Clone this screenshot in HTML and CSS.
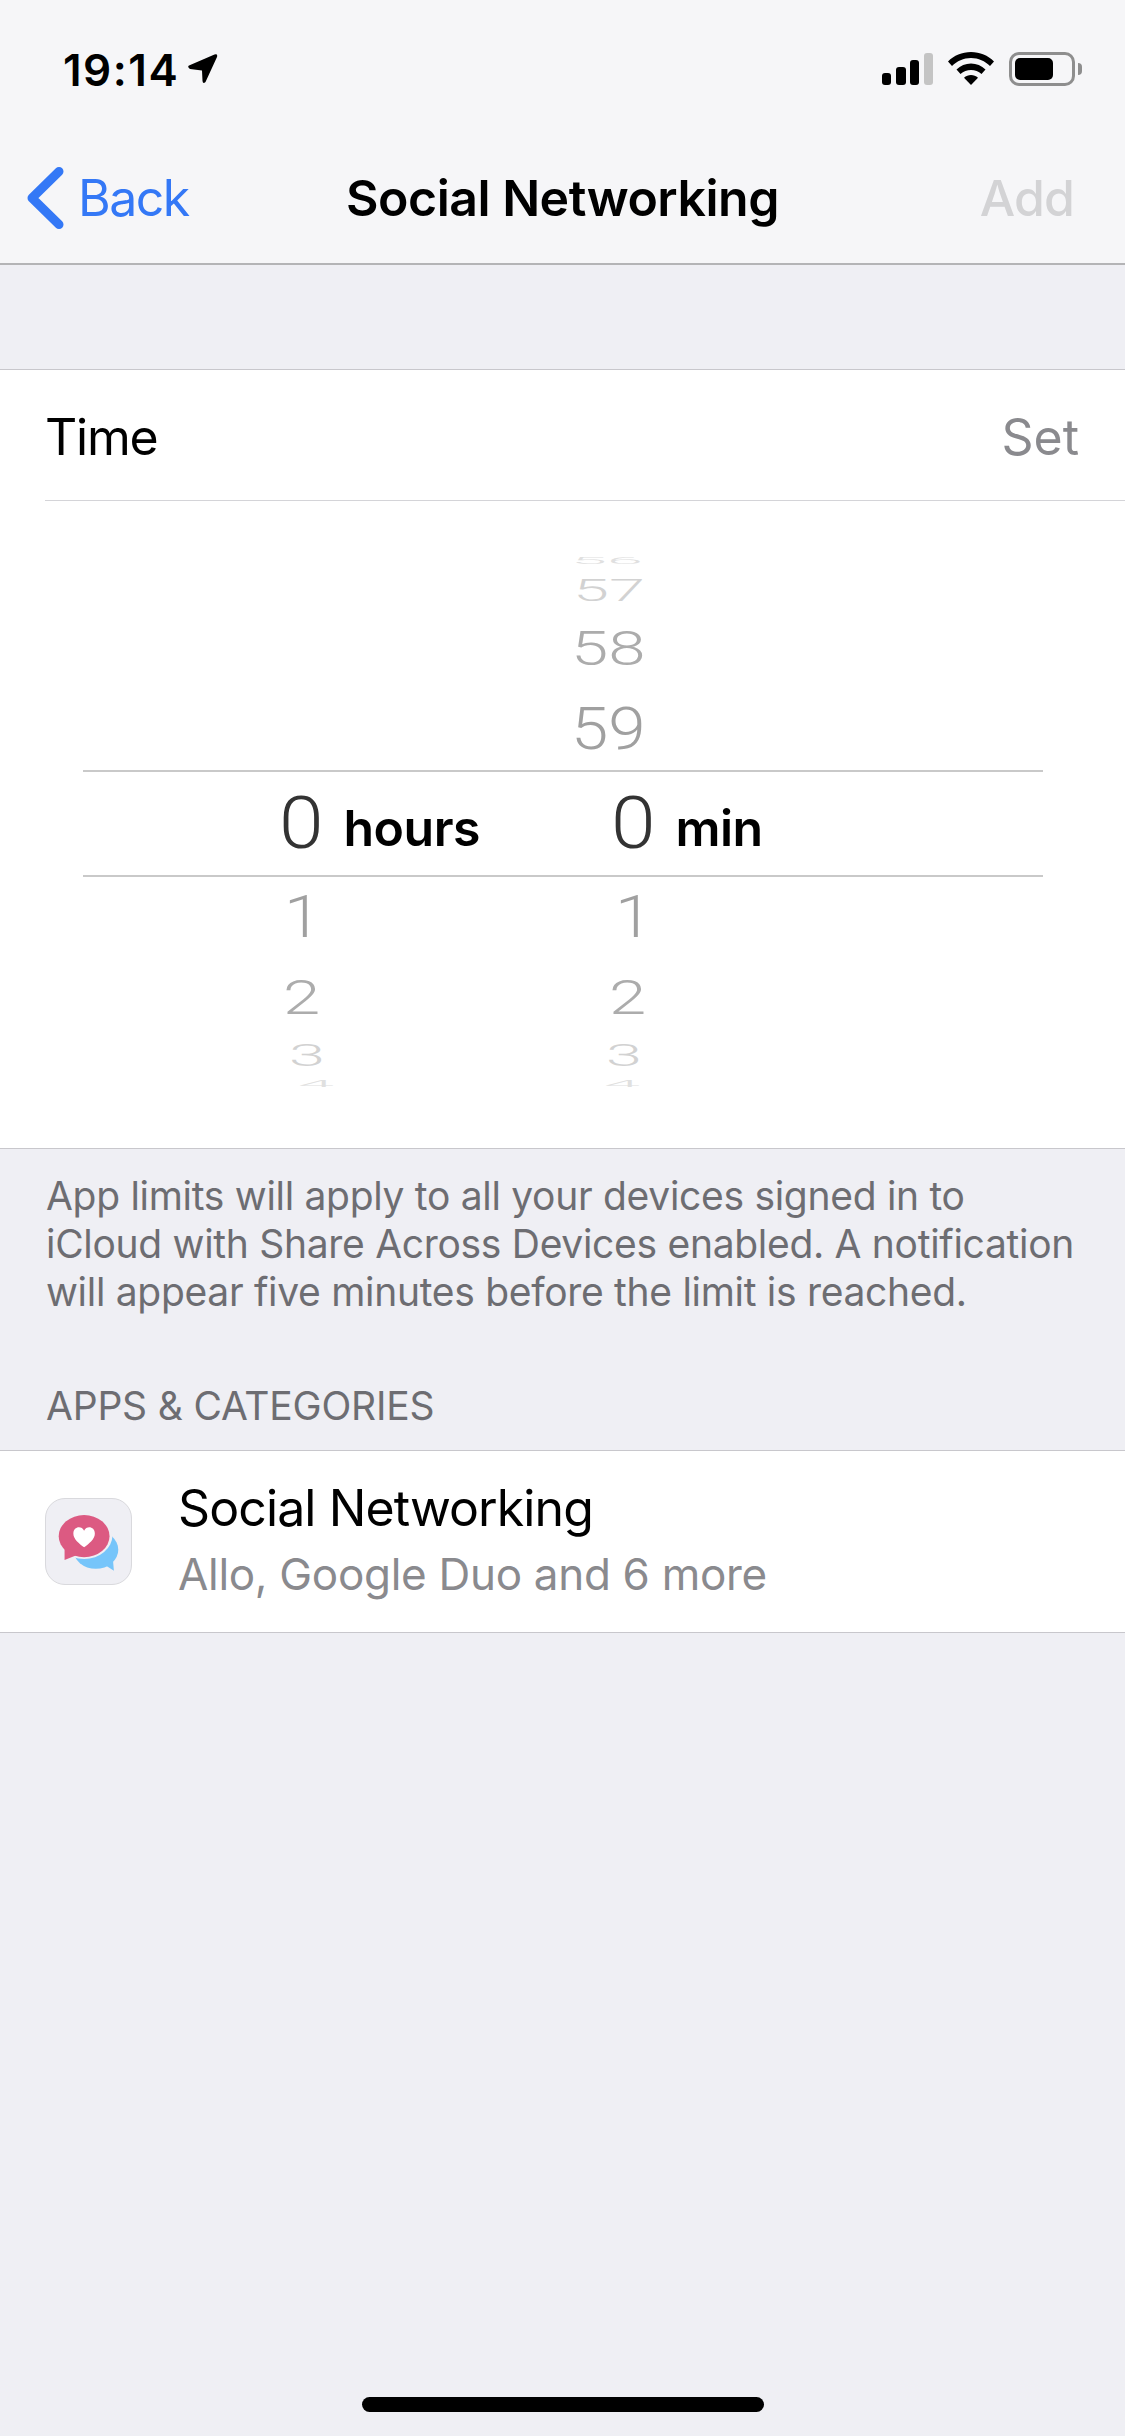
FILE: index.html
```html
<!DOCTYPE html>
<html lang="en">
<head>
<meta charset="utf-8">
<title>Social Networking</title>
<link rel="stylesheet" href="styles.css">
</head>
<body>
<div class="screen">
  <header class="top">
    <div class="status">
      <div class="status-left">
        <span class="clock">19:14</span>
        <svg class="loc" viewBox="0 0 30 31"><path d="M1 11.500 26.500 0.500Q30 -0.500 29 3L17.500 28Q15 30.500 14.500 27L14 16.600 2 15Q-1 13 1 11.500Z"/></svg>
      </div>
      <div class="status-right">
        <svg class="signal" viewBox="0 0 51 32"><rect x="0" y="20" width="9" height="12" rx="3"/><rect x="14" y="14" width="10" height="18" rx="3"/><rect x="28" y="7" width="9" height="25" rx="3"/><rect class="off" x="42" y="0" width="9" height="32" rx="3"/></svg>
        <svg class="wifi" viewBox="0 0 46 33"><path d="M23 0C32 0 40 3.500 46 9.500L42 14C37 9 30.500 6 23 6S9 9 4 14L0 9.500C6 3.500 14 0 23 0Z"/><path d="M23 11.500C28.500 11.500 33.500 13.500 37.500 17.500L33.500 22C30.500 19.300 27 18 23 18S15.500 19.300 12.500 22L8.500 17.500C12.500 13.500 17.500 11.500 23 11.500Z"/><path d="M23 23C25.500 23 28 24 30 25.800L23 33 16 25.800C18 24 20.500 23 23 23Z"/></svg>
        <div class="battery"><div class="battery-body"><div class="battery-fill"></div></div><div class="battery-cap"></div></div>
      </div>
    </div>
    <nav class="nav">
      <a class="back">
        <svg class="chevron" viewBox="0 0 38 62"><path d="M33 4.500 6 31 33 57.500"/></svg>
        <span>Back</span>
      </a>
      <h1 class="title">Social Networking</h1>
      <span class="add">Add</span>
    </nav>
  </header>

  <section class="card">
    <div class="time-row">
      <span class="time-label">Time</span>
      <span class="time-set">Set</span>
    </div>
    <div class="wheel">
      <div class="w-row r56"><span class="cell-h"></span><span class="cell-m"><span class="num m56 s16">56</span></span></div>
      <div class="w-row r57"><span class="cell-h"></span><span class="cell-m"><span class="num m57 s51 f1">57</span></span></div>
      <div class="w-row r58"><span class="cell-h"></span><span class="cell-m"><span class="num m56 s79 f2">58</span></span></div>
      <div class="w-row r59"><span class="cell-h"></span><span class="cell-m"><span class="num m56 s100 f3">59</span></span></div>
      <div class="w-row selected">
        <span class="cell-h"><span class="num big h0">0</span><span class="unit">hours</span></span>
        <span class="cell-m"><span class="num big m0">0</span><span class="unit">min</span></span>
      </div>
      <div class="w-row r1"><span class="cell-h"><span class="num h1 s100 f3">1</span></span><span class="cell-m"><span class="num m1 s100 f3">1</span></span></div>
      <div class="w-row r2"><span class="cell-h"><span class="num h2 s79 f2">2</span></span><span class="cell-m"><span class="num m2 s79 f2">2</span></span></div>
      <div class="w-row r3"><span class="cell-h"><span class="num h3 s51 f1">3</span></span><span class="cell-m"><span class="num m3 s51 f1">3</span></span></div>
      <div class="w-row r4"><span class="cell-h"><span class="num h4 s16">4</span></span><span class="cell-m"><span class="num m4 s16">4</span></span></div>
    </div>
  </section>

  <p class="note">App limits will apply to all your devices signed in to iCloud with Share Across Devices enabled. A notification will appear five minutes before the limit is reached.</p>

  <h2 class="section-head">APPS &amp; CATEGORIES</h2>

  <section class="app-row">
    <div class="app-icon">
      <svg viewBox="0 0 87 87">
        <ellipse cx="51" cy="52" rx="23" ry="19.500" fill="#76c5fa"/>
        <path d="M58 66 69.500 73.500 68 56Z" fill="#76c5fa"/>
        <ellipse cx="39" cy="37" rx="29" ry="24.500" fill="#efeff4"/>
        <path d="M14 52 13 66 36 57Z" fill="#efeff4"/>
        <ellipse cx="39" cy="38" rx="26" ry="21.500" fill="#dc5a82"/>
        <path d="M19 49 19 62.500 35 56Z" fill="#dc5a82"/>
        <path d="M39 49.500C34 45.500 28 41 28 35.500 28 28 36.500 27 39 32.500 41.500 27 50 28 50 35.500 50 41 44 45.500 39 49.500Z" fill="#fff"/>
      </svg>
    </div>
    <div class="app-text">
      <div class="app-name">Social Networking</div>
      <div class="app-sub">Allo, Google Duo and 6 more</div>
    </div>
  </section>

  <div class="home-wrap"><div class="home-bar"></div></div>
</div>
</body>
</html>
```
FILE: styles.css
```css
* { box-sizing: border-box; }
html, body { margin: 0; padding: 0; }
body { width: 1125px; height: 2436px; overflow: hidden; background: #efeff4; font-family: Inter, "Liberation Sans", sans-serif; color: #000; }
.screen { width: 1125px; height: 2436px; display: flex; flex-direction: column; }

.top { height: 265px; background: #f6f6f8; border-bottom: 2px solid #b4b4b6; flex: none; }
.status { height: 132px; display: flex; justify-content: space-between; padding: 52px 43px 0 63px; }
.status-left { display: flex; align-items: flex-start; }
.clock { font-size: 44px; font-weight: 600; line-height: 36px; letter-spacing: 1.5px; }
.loc { width: 30px; height: 31px; margin: 2px 0 0 9px; }
.status-right { display: flex; align-items: flex-start; }
.signal { width: 51px; height: 32px; margin: 1px 0 0 0; }
.signal .off { fill: #c4c4c4; }
.wifi { width: 46px; height: 33px; margin: 0 0 0 15px; }
.battery { display: flex; align-items: center; margin-left: 15px; height: 34px; }
.battery-body { width: 66px; height: 34px; border: 3px solid #8e8e8e; border-radius: 10px; padding: 3px; }
.battery-fill { width: 38px; height: 22px; background: #000; border-radius: 5px; }
.battery-cap { width: 4px; height: 12px; margin-left: 3px; background: #8e8e8e; border-radius: 0 6px 6px 0; }

.nav { height: 131px; display: grid; grid-template-columns: 1fr auto 1fr; align-items: center; padding: 0 52px; }
.back { display: flex; align-items: center; color: #3478f6; font-size: 50px; gap: 14px; letter-spacing: -1.5px; margin-left: -26px; }
.chevron { width: 38px; height: 62px; fill: none; stroke: #3478f6; stroke-width: 9; stroke-linecap: round; stroke-linejoin: round; }
.title { margin: 0; font-size: 50px; font-weight: 600; letter-spacing: -0.5px; white-space: nowrap; }
.add { justify-self: end; color: #d3d3d5; font-size: 50px; font-weight: 500; letter-spacing: -0.9px; margin-right: -1px; }

.card { margin-top: 104px; height: 780px; flex: none; background: #fff; border-top: 1px solid #c8c7cc; border-bottom: 1px solid #c8c7cc; }
.time-row { margin-left: 45px; height: 131px; padding: 4px 46px 0 0; display: flex; align-items: center; justify-content: space-between; border-bottom: 1px solid #d4d4d8; font-size: 50px; }
.time-label { letter-spacing: -1.2px; }
.time-set { color: #8a8a8e; }

.wheel { padding: 49px 82px 0 83px; }
.w-row { display: flex; align-items: center; }
.cell-h { width: 473px; display: flex; align-items: center; }
.cell-m { display: flex; align-items: center; }
.r56 { height: 22px; }
.r57 { height: 38px; }
.r58 { height: 78px; }
.r59 { height: 82px; }
.selected { height: 107px; border-top: 2px solid #c9c9c9; border-bottom: 2px solid #c9c9c9; }
.r1 { height: 80px; }
.r2 { height: 82px; }
.r3 { height: 34px; }
.r4 { height: 6px; margin-top: 8px; }

.num { display: block; font-family: Roboto, "Liberation Sans", sans-serif; font-weight: 300; font-size: 60px; line-height: 1; color: #a0a0a0; flex: none; transform-origin: left center; }
.big { font-size: 73px; color: #333; transform: scaleX(1.1); }
.unit { font-size: 50px; font-weight: 600; letter-spacing: -0.5px; margin-top: 8px; }
.f1 { color: #d2d2d2; }
.f2 { color: #acacac; }
.f3 { color: #a0a0a0; }
.s16 { transform: scale(1.08, 0.15); color: #e0e0e0; }
.s51 { transform: scale(1.08, 0.51); }
.s79 { transform: scale(1.12, 0.79); }
.s100 { transform: scale(1.12, 1); }

.h0 { margin-left: 196px; margin-right: 24px; }
.m0 { margin-left: 55px; margin-right: 24px; }
.m56 { margin-left: 15px; }
.m57 { margin-left: 17px; }
.h1 { margin-left: 201px; }
.h2 { margin-left: 200px; }
.h3 { margin-left: 206px; }
.h4 { margin-left: 215px; }
.m1 { margin-left: 59px; }
.m2 { margin-left: 53px; }
.m3 { margin-left: 50px; }
.m4 { margin-left: 48px; }

.note { margin: 0; padding: 23px 50px 0 46px; font-size: 39px; line-height: 48px; letter-spacing: -0.3px; color: #6d6d72; flex: none; }
.section-head { margin: 66px 0 0; padding-left: 46px; font-size: 39px; line-height: 48px; font-weight: 400; letter-spacing: -0.2px; color: #6d6d72; flex: none; }
.app-row { margin-top: 20px; height: 183px; flex: none; background: #fff; border-top: 1px solid #c8c7cc; border-bottom: 1px solid #c8c7cc; display: flex; align-items: center; padding: 0 0 2px 45px; gap: 46px; }
.app-icon { width: 87px; height: 87px; border-radius: 20px; background: #efeff4; border: 1px solid #d9d9dd; overflow: hidden; flex: none; margin-top: 2px; }
.app-icon svg { display: block; width: 85px; height: 85px; }
.app-name { font-size: 50px; line-height: 66px; letter-spacing: -0.9px; }
.app-sub { font-size: 44px; line-height: 66px; letter-spacing: -0.3px; color: #8a8a8e; }

.home-wrap { margin-top: auto; height: 39px; display: flex; justify-content: center; }
.home-bar { width: 402px; height: 15px; border-radius: 8px; background: #000; }
```
